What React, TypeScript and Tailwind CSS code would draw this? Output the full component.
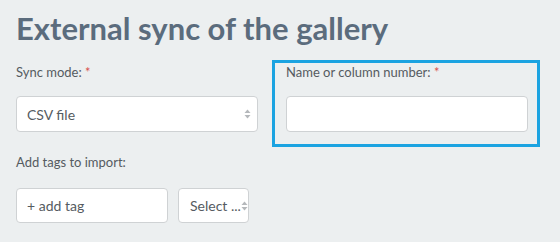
import { ReactNode } from "react";

const Arrows = () => (
  <svg width="7" height="10" viewBox="0 0 7 10" className="shrink-0">
    <path d="M3.5 0.5 L6.5 4 L0.5 4 Z" fill="#b5b8bb" />
    <path d="M3.5 9.5 L6.5 6 L0.5 6 Z" fill="#b5b8bb" />
  </svg>
);

const Label = ({ children }: { children: ReactNode }) => (
  <label className="block text-[13px] leading-[18px] text-[#555b61]">
    {children} <span className="text-[#d9534f]">*</span>
  </label>
);

const App = () => {
  return (
    <div className="min-h-screen bg-[#eceff0] px-4 pt-[8px] font-['Lato',sans-serif]">
      <h1 className="text-[31px] font-bold leading-[40px] text-[#5b6c7d] mb-[12px]">
        External sync of the gallery
      </h1>

      <div className="flex items-start">
        {/* Sync mode */}
        <div className="w-[242px] pt-[3px]">
          <Label>Sync mode:</Label>
          <div className="mt-[15px] h-[36px] flex items-center justify-between rounded-[4px] border border-[#cfd2d4] bg-white pl-[10px] pr-[6px]">
            <span className="text-[14px] text-[#555b61]">CSV file</span>
            <Arrows />
          </div>
        </div>

        {/* Highlighted field */}
        <div className="ml-[14px] border-[3px] border-[#1ba3e1] pl-[11px] pr-[9px] pb-[12px]">
          <Label>Name or column number:</Label>
          <input
            className="mt-[15px] block w-[242px] h-[36px] rounded-[4px] border border-[#cfd2d4] bg-white px-[10px] outline-none"
            type="text"
          />
        </div>
      </div>

      <div className="mt-[6px]">
        <label className="block text-[13px] leading-[18px] text-[#555b61]">Add tags to import:</label>
        <div className="mt-[17px] flex gap-[10px]">
          <div className="w-[152px] h-[35px] flex items-center rounded-[4px] border border-[#cfd2d4] bg-white px-[10px]">
            <span className="text-[14px] text-[#555b61]">+ add tag</span>
          </div>
          <div className="w-[71px] h-[35px] flex items-center justify-between rounded-[4px] border border-[#cfd2d4] bg-white pl-[11px] pr-[3px]">
            <span className="text-[14px] text-[#555b61] whitespace-nowrap">Select ...</span>
            <Arrows />
          </div>
        </div>
      </div>
    </div>
  );
};

export default App;
